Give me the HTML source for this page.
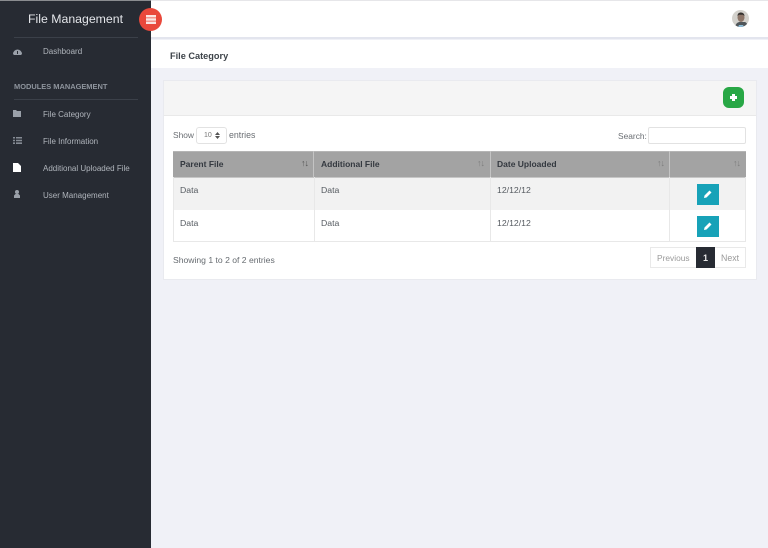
<!DOCTYPE html>
<html><head><meta charset="utf-8"><style>
*{box-sizing:border-box}
html,body{margin:0;padding:0}
body{width:768px;height:548px;overflow:hidden;position:relative;background:#f0f1f7;font-family:"Liberation Sans",sans-serif;color:#5a5f66}
div,span,svg{position:absolute}
.t{white-space:nowrap;line-height:12px;filter:blur(.3px)}
svg{filter:blur(.3px)}
.m{font-size:8px;color:#b0b5bc;left:43px}
.th{font-size:8.5px;font-weight:bold;color:#33383f;top:158px}
.td{font-size:8.7px;color:#555a60}
.s{font-size:9px;color:#7d7d7d;top:157px;letter-spacing:-1px}
.v{top:177px;width:1px;height:65px;background:#e8e8e8}
.e{left:697px;width:22px;height:21px;background:#17a2b8}
</style></head><body>
<div style="left:151px;top:0;width:617px;height:39px;background:#fff;border-top:1px solid #e6e6e9;border-bottom:2px solid #e3e5ee"></div>
<div style="left:151px;top:40px;width:617px;height:28px;background:#fff"></div>
<div class="t" style="left:170px;top:50px;font-size:9.2px;font-weight:bold;color:#3d4349">File Category</div>

<div style="left:0;top:0;width:151px;height:548px;background:#272b33"></div>
<div style="left:0;top:0;width:151px;height:1px;background:#8a8c90"></div>
<div class="t" style="left:28px;top:13px;font-size:12.3px;color:#e4e6ea">File Management</div>
<div style="left:14px;top:37px;width:124px;height:1px;background:#3b4049"></div>
<svg style="left:13px;top:47px" width="9" height="8" viewBox="0 0 9 8"><path d="M0 7A4.500 4.500 0 1 1 9 7L8 8H1Z" fill="#9aa0a9"/><path d="M4.500 4V7" stroke="#272b33"/></svg>
<div class="t m" style="top:46px">Dashboard</div>
<div class="t" style="left:14px;top:81px;font-size:7.45px;font-weight:bold;color:#8e949d">MODULES MANAGEMENT</div>
<div style="left:14px;top:99px;width:124px;height:1px;background:#3b4049"></div>
<svg style="left:13px;top:110px" width="8" height="7" viewBox="0 0 8 7"><path d="M0 0H3L4 1H8V7H0Z" fill="#9aa0a9"/></svg>
<div class="t m" style="top:109px">File Category</div>
<svg style="left:13px;top:137px" width="9" height="7" viewBox="0 0 9 7"><path d="M0 0H2V1.500H0ZM3 0H9V1.500H3ZM0 2.700H2V4.200H0ZM3 2.700H9V4.200H3ZM0 5.400H2V7H0ZM3 5.400H9V7H3Z" fill="#858b94"/></svg>
<div class="t m" style="top:136px">File Information</div>
<svg style="left:13px;top:163px" width="8" height="9" viewBox="0 0 8 9"><path d="M0 0H5L8 3V9H0Z" fill="#fff"/></svg>
<div class="t m" style="top:163px">Additional Uploaded File</div>
<svg style="left:14px;top:190px" width="6" height="8" viewBox="0 0 6 8"><circle cx="3" cy="2" r="2" fill="#9aa0a9"/><path d="M0 8V5.500L1.500 4H4.500L6 5.500V8Z" fill="#9aa0a9"/></svg>
<div class="t m" style="top:190px">User Management</div>

<div style="left:139px;top:8px;width:23px;height:23px;border-radius:50%;background:#e9483b"></div>
<svg style="left:146px;top:15px" width="10" height="9" viewBox="0 0 10 9"><path d="M0 0H10V2.500H0ZM0 3.300H10V5.700H0ZM0 6.500H10V9H0Z" fill="#fbe4e1"/></svg>

<svg style="left:732px;top:10px" width="17" height="17" viewBox="0 0 17 17"><defs><clipPath id="c"><circle cx="8.500" cy="8.500" r="8.500"/></clipPath></defs><g clip-path="url(#c)"><rect width="17" height="17" fill="#d3d1cc"/><path d="M3 17C4 13 6 12 8 12L13 12C15 13 16 15 16 17Z" fill="#50565a"/><ellipse cx="9" cy="7.500" rx="3.500" ry="4.500" fill="#8c7568"/><path d="M5.500 6C5.500 3 7.500 2.500 9 2.500C11 2.500 12.500 4 12.500 6L11 4.800H7Z" fill="#33302e"/><path d="M6 17H12L11 15H7Z" fill="#8ebdd8"/></g></svg>

<div style="left:163px;top:80px;width:594px;height:200px;background:#fff;border:1px solid #e9eaef"></div>
<div style="left:164px;top:81px;width:592px;height:35px;background:#f5f5f5;border-bottom:1px solid #e9e9e9"></div>
<div style="left:723px;top:87px;width:21px;height:21px;border-radius:6px;background:#28a745"></div>
<div style="left:730px;top:96px;width:7px;height:2.5px;background:#fff"></div>
<div style="left:732.3px;top:93.7px;width:2.5px;height:7px;background:#fff"></div>

<div class="t" style="left:173px;top:129px;font-size:8.4px;color:#6a6e73">Show</div>
<div style="left:196px;top:127px;width:31px;height:17px;background:#fff;border:1px solid #e2e2e2;border-radius:3px"></div>
<div class="t" style="left:204px;top:130px;font-size:7px;color:#777">10</div>
<svg style="left:215px;top:132px" width="5" height="7" viewBox="0 0 5 7"><path d="M0 3H5L2.500 0ZM0 4H5L2.500 7Z" fill="#555"/></svg>
<div class="t" style="left:229px;top:129px;font-size:8.8px;color:#6a6e73">entries</div>
<div class="t" style="left:618px;top:130px;font-size:8.4px;color:#6a6e73">Search:</div>
<div style="left:648px;top:127px;width:98px;height:17px;background:#fff;border:1px solid #e2e2e2;border-radius:2px"></div>

<div style="left:173px;top:151px;width:573px;height:27px;background:#a3a3a3;border-top:1px solid #b5b5b5;border-bottom:1px solid #c6c6c6"></div>
<div style="left:313px;top:151px;width:1px;height:26px;background:#c4c4c4"></div>
<div style="left:490px;top:151px;width:1px;height:26px;background:#c4c4c4"></div>
<div style="left:669px;top:151px;width:1px;height:26px;background:#c4c4c4"></div>
<div class="t th" style="left:180px">Parent File</div>
<div class="t th" style="left:321px">Additional File</div>
<div class="t th" style="left:497px">Date Uploaded</div>
<div class="t s" style="left:301px;color:#555">↑↓</div>
<div class="t s" style="left:477px">↑↓</div>
<div class="t s" style="left:657px">↑↓</div>
<div class="t s" style="left:733px">↑↓</div>

<div style="left:173px;top:178px;width:573px;height:32px;background:#f2f2f2"></div>
<div style="left:173px;top:210px;width:573px;height:32px;background:#fff;border-bottom:1px solid #e8e8e8"></div>
<div class="v" style="left:173px"></div><div class="v" style="left:314px"></div><div class="v" style="left:490px"></div><div class="v" style="left:669px"></div><div class="v" style="left:745px"></div>

<div class="t td" style="left:180px;top:184px">Data</div>
<div class="t td" style="left:321px;top:184px">Data</div>
<div class="t td" style="left:497px;top:184px">12/12/12</div>
<div class="t td" style="left:180px;top:217px">Data</div>
<div class="t td" style="left:321px;top:217px">Data</div>
<div class="t td" style="left:497px;top:217px">12/12/12</div>
<div class="e" style="top:184px"></div>
<div class="e" style="top:216px"></div>
<svg style="left:704px;top:190px" width="8" height="8" viewBox="0 0 8 8"><path d="M0 8L.5 5.500 5.500.5 7.500 2.500 2.500 7.500Z" fill="#fff"/></svg>
<svg style="left:704px;top:222px" width="8" height="8" viewBox="0 0 8 8"><path d="M0 8L.5 5.500 5.500.5 7.500 2.500 2.500 7.500Z" fill="#fff"/></svg>

<div class="t" style="left:173px;top:254px;font-size:8.6px;color:#666b70">Showing 1 to 2 of 2 entries</div>
<div style="left:650px;top:247px;width:96px;height:21px;background:#fff;border:1px solid #e9e9e9"></div>
<div style="left:696px;top:247px;width:19px;height:21px;background:#272b33"></div>
<div class="t" style="left:657px;top:252px;font-size:8.4px;color:#9a9a9a">Previous</div>
<div class="t" style="left:703px;top:252px;font-size:9px;font-weight:bold;color:#e8e8e8">1</div>
<div class="t" style="left:721px;top:252px;font-size:8.8px;color:#9a9a9a">Next</div>
</body></html>
